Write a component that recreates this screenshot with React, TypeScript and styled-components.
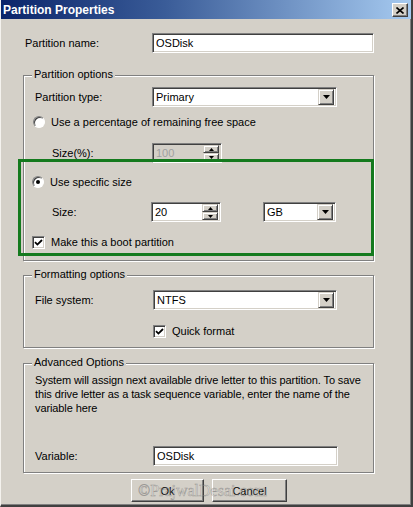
import styled, { createGlobalStyle } from 'styled-components';

const GlobalStyle = createGlobalStyle`
  html, body {
    margin: 0;
    padding: 0;
    background: #d4d0c8;
  }
  body {
    font-family: 'Liberation Sans', Arial, sans-serif;
    font-size: 11px;
    color: #000;
  }
`;

const face = '#d4d0c8';

const Window = styled.div`
  position: relative;
  width: 413px;
  height: 507px;
  box-sizing: border-box;
  background: ${face};
  border-left: 1px solid #f4f2ee;
  border-right: 2px solid #404040;
  border-bottom: 2px solid #404040;
  box-shadow: inset -1px -1px 0 #808080;
  overflow: hidden;
`;

const TitleBar = styled.div`
  height: 19px;
  display: flex;
  align-items: center;
  justify-content: space-between;
  padding: 0 3px 0 3px;
  margin-left: -1px;
  background: linear-gradient(to right, #0a246a 0%, #3a5c98 40%, #a6caf0 100%);
`;

const Title = styled.span`
  color: #fff;
  font-weight: bold;
  font-size: 12px;
  padding-top: 1px;
`;

const RaisedButton = styled.button`
  box-sizing: border-box;
  margin: 0;
  padding: 0;
  background: ${face};
  border: 1px solid;
  border-color: #fff #404040 #404040 #fff;
  box-shadow: inset -1px -1px 0 #808080;
  font-family: 'Liberation Sans', Arial, sans-serif;
  font-size: 11px;
  color: #000;
  display: flex;
  align-items: center;
  justify-content: center;
`;

const CloseButton = styled(RaisedButton)`
  width: 16px;
  height: 14px;
  margin-top: 1px;
`;

const Body = styled.div`
  padding: 14px 0 0 22px;
  display: flex;
  flex-direction: column;
`;

const NameRow = styled.div`
  display: flex;
  align-items: center;
  padding-left: 2px;
`;

const Label = styled.span<{ $width: number }>`
  width: ${p => p.$width}px;
  flex: none;
`;

const GroupBox = styled.div<{ $top: number; $bottom: number }>`
  width: 351px;
  box-sizing: border-box;
  margin-top: ${p => p.$top}px;
  padding-bottom: ${p => p.$bottom}px;
  border: 1px solid #808080;
  box-shadow: inset 1px 1px 0 #fff, 1px 1px 0 #fff;
  display: flex;
  flex-direction: column;
`;

const Legend = styled.span`
  width: max-content;
  height: 13px;
  line-height: 13px;
  margin: -8px 0 0 8px;
  padding: 0 2px;
  background: ${face};
`;

const Row = styled.div<{ $top: number; $indent: number }>`
  display: flex;
  align-items: center;
  margin-top: ${p => p.$top}px;
  padding-left: ${p => p.$indent}px;
  min-height: 16px;
`;

const sunken = `
  box-sizing: border-box;
  border: 1px solid;
  border-color: #808080 #fff #fff #808080;
  box-shadow: inset 1px 1px 0 #404040, inset -1px -1px 0 ${face};
`;

const TextBox = styled.input<{ $width: number }>`
  ${sunken}
  width: ${p => p.$width}px;
  height: 20px;
  margin: 0;
  padding: 0 0 0 3px;
  background: #fff;
  font-family: 'Liberation Sans', Arial, sans-serif;
  font-size: 11px;
  color: #000;
  outline: none;
`;

const Combo = styled.div<{ $width: number; $gap?: number }>`
  ${sunken}
  width: ${p => p.$width}px;
  height: 20px;
  margin-left: ${p => p.$gap ?? 0}px;
  padding: 2px 2px 2px 3px;
  background: #fff;
  display: flex;
  align-items: center;
  justify-content: space-between;
`;

const DropButton = styled.span`
  box-sizing: border-box;
  width: 16px;
  height: 16px;
  background: ${face};
  border: 1px solid;
  border-color: ${face} #404040 #404040 ${face};
  box-shadow: inset 1px 1px 0 #fff, inset -1px -1px 0 #808080;
  display: flex;
  align-items: center;
  justify-content: center;
`;

const Spin = styled.div<{ $disabled?: boolean }>`
  ${sunken}
  width: 70px;
  height: 20px;
  padding: 2px 2px 2px 3px;
  background: ${p => (p.$disabled ? face : '#fff')};
  color: ${p => (p.$disabled ? '#a0a0a0' : '#000')};
  display: flex;
  align-items: center;
  justify-content: space-between;
`;

const SpinButtons = styled.span`
  display: flex;
  flex-direction: column;
  width: 16px;
  height: 16px;
`;

const SpinHalf = styled(DropButton)`
  width: 16px;
  height: 8px;
`;

const Radio = styled.span<{ $checked?: boolean }>`
  box-sizing: border-box;
  width: 12px;
  height: 12px;
  flex: none;
  border-radius: 50%;
  border: 1px solid;
  border-color: #808080 #fff #fff #808080;
  box-shadow: inset 1px 1px 0 #404040;
  background: #fff;
  display: flex;
  align-items: center;
  justify-content: center;
  &::after {
    content: '';
    width: 4px;
    height: 4px;
    border-radius: 50%;
    background: ${p => (p.$checked ? '#000' : 'transparent')};
  }
`;

const CheckBox = styled.span`
  ${sunken}
  width: 13px;
  height: 13px;
  flex: none;
  background: #fff;
  display: flex;
  align-items: center;
  justify-content: center;
`;

const OptionText = styled.span`
  margin-left: 6px;
`;

const Highlight = styled.div`
  margin: -4px -1px 2px -6px;
  border: 3px solid #147a1e;
  padding: 12px 0 3px;
  display: flex;
  flex-direction: column;
`;

const Description = styled.p`
  margin: 4px 0 0;
  padding-left: 11px;
  line-height: 14px;
  letter-spacing: -0.1px;
`;

const ButtonRow = styled.div`
  display: flex;
  gap: 8px;
  margin-top: 6px;
  padding-left: 108px;
`;

const DialogButton = styled(RaisedButton)<{ $width: number }>`
  width: ${p => p.$width}px;
  height: 23px;
`;

// faint embossed site stamp across the dialog buttons
const Watermark = styled.span`
  position: absolute;
  left: 137px;
  top: 482px;
  font-family: 'Liberation Serif', 'Times New Roman', serif;
  font-size: 16px;
  color: rgba(255, 255, 255, 0.25);
  -webkit-text-stroke: 0.5px rgba(90, 90, 90, 0.5);
  pointer-events: none;
`;

function Arrow({ up = false, size = 7 }: { up?: boolean; size?: number }) {
  const h = Math.ceil(size / 2);
  return (
    <svg width={size} height={h} viewBox={`0 0 ${size} ${h}`}>
      <path
        d={up ? `M0 ${h}H${size}L${size / 2} 0Z` : `M0 0H${size}L${size / 2} ${h}Z`}
        fill="#000"
      />
    </svg>
  );
}

function Check() {
  return (
    <svg width="9" height="9" viewBox="0 0 9 9">
      <path d="M1 4.2L3.4 6.6L8 2" fill="none" stroke="#000" strokeWidth="1.8" />
    </svg>
  );
}

function Select({ value, width, gap }: { value: string; width: number; gap?: number }) {
  return (
    <Combo $width={width} $gap={gap}>
      <span>{value}</span>
      <DropButton>
        <Arrow />
      </DropButton>
    </Combo>
  );
}

function SpinBox({ value, disabled }: { value: string; disabled?: boolean }) {
  return (
    <Spin $disabled={disabled}>
      <span>{value}</span>
      <SpinButtons>
        <SpinHalf>
          <Arrow up size={5} />
        </SpinHalf>
        <SpinHalf>
          <Arrow size={5} />
        </SpinHalf>
      </SpinButtons>
    </Spin>
  );
}

export default function App() {
  return (
    <Window>
      <GlobalStyle />
      <TitleBar>
        <Title>Partition Properties</Title>
        <CloseButton>
          <svg width="8" height="7" viewBox="0 0 8 7">
            <path d="M0.5 0.5L7.5 6.5M7.5 0.5L0.5 6.5" stroke="#000" strokeWidth="1.6" />
          </svg>
        </CloseButton>
      </TitleBar>

      <Body>
        <NameRow>
          <Label $width={127}>Partition name:</Label>
          <TextBox $width={222} readOnly value="OSDisk" />
        </NameRow>

        <GroupBox $top={22} $bottom={2}>
          <Legend>Partition options</Legend>
          <Row $top={6} $indent={11}>
            <Label $width={117}>Partition type:</Label>
            <Select value="Primary" width={185} />
          </Row>
          <Row $top={7} $indent={9}>
            <Radio />
            <OptionText>Use a percentage of remaining free space</OptionText>
          </Row>
          <Row $top={13} $indent={28}>
            <Label $width={100}>Size(%):</Label>
            <SpinBox value="100" disabled />
          </Row>
          <Highlight>
            <Row $top={0} $indent={11}>
              <Radio $checked />
              <OptionText>Use specific size</OptionText>
            </Row>
            <Row $top={12} $indent={31}>
              <Label $width={99}>Size:</Label>
              <SpinBox value="20" />
              <Select value="GB" width={73} gap={42} />
            </Row>
            <Row $top={12} $indent={11}>
              <CheckBox>
                <Check />
              </CheckBox>
              <OptionText>Make this a boot partition</OptionText>
            </Row>
          </Highlight>
        </GroupBox>

        <GroupBox $top={14} $bottom={8}>
          <Legend>Formatting options</Legend>
          <Row $top={9} $indent={11}>
            <Label $width={118}>File system:</Label>
            <Select value="NTFS" width={184} />
          </Row>
          <Row $top={13} $indent={129}>
            <CheckBox>
              <Check />
            </CheckBox>
            <OptionText>Quick format</OptionText>
          </Row>
        </GroupBox>

        <GroupBox $top={15} $bottom={6}>
          <Legend>Advanced Options</Legend>
          <Description>
            System will assign next available drive letter to this partition. To save
            <br />
            this drive letter as a task sequence variable, enter the name of the
            <br />
            variable here
          </Description>
          <Row $top={31} $indent={11}>
            <Label $width={118}>Variable:</Label>
            <TextBox $width={185} readOnly value="OSDisk" />
          </Row>
        </GroupBox>

        <ButtonRow>
          <DialogButton $width={73}>Ok</DialogButton>
          <DialogButton $width={75}>Cancel</DialogButton>
        </ButtonRow>
      </Body>

      <Watermark>©PrajwalDesai.com</Watermark>
    </Window>
  );
}
